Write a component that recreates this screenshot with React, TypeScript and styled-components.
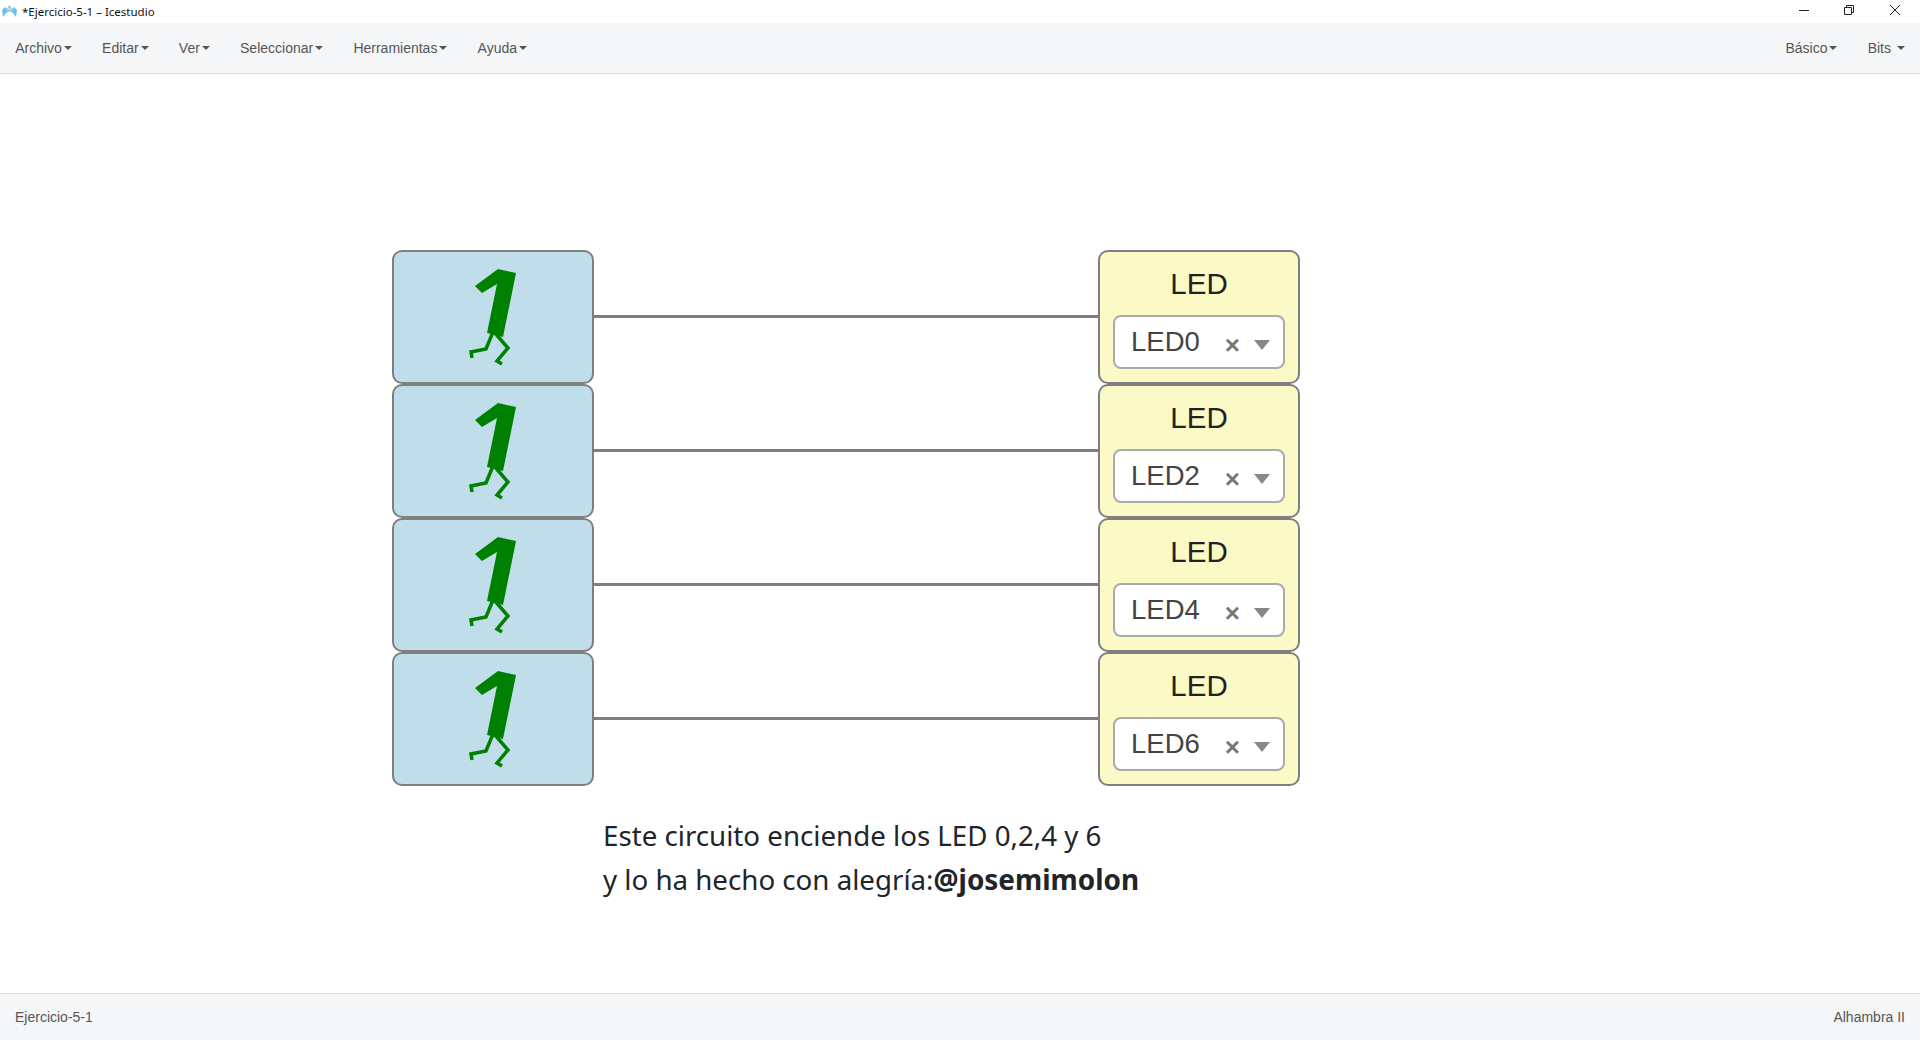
import styled, { createGlobalStyle } from "styled-components";

const GlobalStyle = createGlobalStyle`
  html, body {
    margin: 0;
    padding: 0;
    height: 100%;
    background: #fff;
    font-family: "Liberation Sans", Arial, sans-serif;
  }
`;

const Page = styled.div`
  display: flex;
  flex-direction: column;
  height: 1040px;
  overflow: hidden;
`;

const TitleBar = styled.div`
  display: flex;
  align-items: center;
  height: 23px;
  background: #fff;
`;

const AppLogo = styled.svg`
  width: 15px;
  height: 13px;
  margin: 0 5px 0 2px;
`;

const WindowTitle = styled.span`
  flex: 1;
  font-family: "Noto Sans", sans-serif;
  font-size: 11.5px;
  color: #111;
`;

const WindowButton = styled.svg<{ $gap: number }>`
  width: 12px;
  height: 12px;
  margin-right: ${(p) => p.$gap}px;
  margin-bottom: 3px;
`;

const MenuBar = styled.nav`
  display: flex;
  justify-content: space-between;
  align-items: center;
  height: 50px;
  background: #f5f6f8;
  border-bottom: 1px solid #dcdcdc;
`;

const MenuGroup = styled.div`
  display: flex;
  align-items: center;
`;

const MenuItem = styled.span`
  display: flex;
  align-items: center;
  padding: 0 15px 0 15.2px;
  font-size: 14px;
  color: #555;
`;

const Caret = styled.i<{ $gap?: number }>`
  width: 0;
  height: 0;
  margin-left: ${(p) => p.$gap ?? 2}px;
  border-top: 4px solid #555;
  border-left: 4px solid transparent;
  border-right: 4px solid transparent;
`;

const Canvas = styled.main`
  flex: 1;
  display: flex;
  flex-direction: column;
  padding: 176px 0 0 392px;
`;

const Rows = styled.div`
  display: flex;
  flex-direction: column;
  width: 908px;
`;

const Row = styled.div`
  display: flex;
  align-items: center;
  height: 134px;
`;

const Block = styled.div`
  box-sizing: border-box;
  width: 202px;
  height: 134px;
  border: 2px solid #7f7f7f;
  border-radius: 10px;
`;

const ConstantBlock = styled(Block)`
  background: #c0deea;
`;

const LedBlock = styled(Block)`
  background: #fbf9c6;
  padding: 0 13px;
`;

const Wire = styled.div`
  flex: 1;
  height: 3px;
  margin-bottom: 2px;
  background: #7f7f7f;
`;

const BitIcon = styled.svg`
  display: block;
  width: 198px;
  height: 130px;
`;

const LedTitle = styled.div`
  height: 63px;
  line-height: 63px;
  text-align: center;
  font-size: 29.5px;
  color: #222;
`;

const PinSelect = styled.div`
  display: flex;
  align-items: center;
  box-sizing: border-box;
  height: 54px;
  padding: 0 13px 0 16px;
  background: #fff;
  border: 2px solid #aaa;
  border-radius: 8px;
`;

const PinName = styled.span`
  flex: 1;
  font-size: 27.5px;
  color: #444;
  margin-top: -1px;
`;

const ClearMark = styled.span`
  font-size: 26px;
  font-weight: 700;
  color: #777;
  margin: 6px 14px 0 0;
  line-height: 1;
`;

const SelectArrow = styled.i`
  width: 0;
  height: 0;
  margin-top: 5px;
  border-top: 10px solid #888;
  border-left: 8px solid transparent;
  border-right: 8px solid transparent;
`;

const Note = styled.div`
  margin: 27px 0 0 211px;
  font-family: "Noto Sans", sans-serif;
  font-size: 27.7px;
  line-height: 44px;
  color: #212529;

  strong {
    font-size: 27.9px;
  }
`;

const Footer = styled.footer`
  display: flex;
  justify-content: space-between;
  align-items: center;
  height: 45px;
  padding: 0 15px 1px;
  background: #f5f6f8;
  border-top: 1px solid #dcdcdc;
  font-size: 14px;
  color: #555;
`;

const pins = ["LED0", "LED2", "LED4", "LED6"];
const leftMenus = ["Archivo", "Editar", "Ver", "Seleccionar", "Herramientas", "Ayuda"];

const Bit1 = () => (
  <BitIcon viewBox="0 0 198 130">
    <polygon points="104,17 122,21 109,85 93,81 103,32 88,41 81,34" fill="#008000" />
    <polyline
      points="99,80 92,97 77,100 78,106"
      fill="none"
      stroke="#008000"
      strokeWidth="3.5"
    />
    <polyline
      points="101,81 114,96 103,109 108,112"
      fill="none"
      stroke="#008000"
      strokeWidth="3.5"
    />
  </BitIcon>
);

const App = () => {
  return (
    <Page>
      <GlobalStyle />
      <TitleBar>
        <AppLogo viewBox="0 0 15 13">
          <path d="M0 5 L3 2 L5 4 L7.5 0 L10 4 L12 2 L15 5 L14 12 L11 8 L7.5 6 L4 8 L1 12 Z" fill="#6fbfe3" />
          <path d="M4 6 L7.5 2 L11 6 L7.5 4.5 Z" fill="#c4e6f5" />
        </AppLogo>
        <WindowTitle>*Ejercicio-5-1 – Icestudio</WindowTitle>
        <WindowButton $gap={33} viewBox="0 0 12 12">
          <path d="M1 6.5 H11" stroke="#222" fill="none" />
        </WindowButton>
        <WindowButton $gap={34} viewBox="0 0 12 12">
          <path d="M1.5 3.5 H8.5 V10.5 H1.5 Z M3.5 3.5 V1.5 H10.5 V8.5 H8.5" stroke="#222" fill="none" />
        </WindowButton>
        <WindowButton $gap={19} viewBox="0 0 12 12">
          <path d="M1 1 L11 11 M11 1 L1 11" stroke="#222" fill="none" />
        </WindowButton>
      </TitleBar>
      <MenuBar>
        <MenuGroup>
          {leftMenus.map((name) => (
            <MenuItem key={name}>
              {name}
              <Caret />
            </MenuItem>
          ))}
        </MenuGroup>
        <MenuGroup>
          <MenuItem>
            Básico
            <Caret />
          </MenuItem>
          <MenuItem>
            Bits
            <Caret $gap={6} />
          </MenuItem>
        </MenuGroup>
      </MenuBar>
      <Canvas>
        <Rows>
          {pins.map((pin) => (
            <Row key={pin}>
              <ConstantBlock>
                <Bit1 />
              </ConstantBlock>
              <Wire />
              <LedBlock>
                <LedTitle>LED</LedTitle>
                <PinSelect>
                  <PinName>{pin}</PinName>
                  <ClearMark>×</ClearMark>
                  <SelectArrow />
                </PinSelect>
              </LedBlock>
            </Row>
          ))}
        </Rows>
        <Note>
          Este circuito enciende los LED 0,2,4 y 6
          <br />y lo ha hecho con alegría:<strong>@josemimolon</strong>
        </Note>
      </Canvas>
      <Footer>
        <span>Ejercicio-5-1</span>
        <span>Alhambra II</span>
      </Footer>
    </Page>
  );
};

export default App;
